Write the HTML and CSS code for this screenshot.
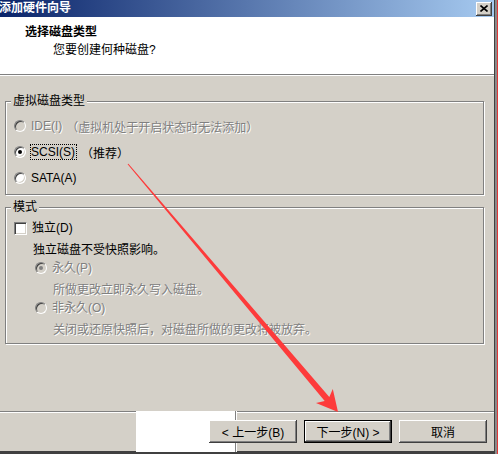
FILE: index.html
```html
<!DOCTYPE html>
<html lang="zh-CN">
<head>
    <meta charset="UTF-8">
    <title>添加硬件向导</title>
    <link rel="stylesheet" href="styles.css">
</head>
<body>
    <div class="screen">
        <div class="window">
            <div class="titlebar">
                <span class="title">添加硬件向导</span>
                <button class="close-btn">
                    <svg width="8" height="7" viewBox="0 0 8 7"><path d="M0.5 0.5 L7.5 6.5 M7.5 0.5 L0.5 6.5" stroke="#000" stroke-width="1.6"/></svg>
                </button>
            </div>
            <div class="page-header">
                <div class="page-title">选择磁盘类型</div>
                <div class="page-sub">您要创建何种磁盘?</div>
            </div>

            <div class="content">
                <fieldset class="group">
                    <legend>虚拟磁盘类型</legend>
                    <div class="group-body first">
                        <div class="opt disabled">
                            <span class="radio"></span>
                            <span class="opt-text">IDE(I)</span>
                            <span class="note">（虚拟机处于开启状态时无法添加）</span>
                        </div>
                        <div class="opt">
                            <span class="radio checked"></span>
                            <span class="opt-text focus">SCSI(S)</span>
                            <span class="note">（推荐）</span>
                        </div>
                        <div class="opt">
                            <span class="radio"></span>
                            <span class="opt-text">SATA(A)</span>
                        </div>
                    </div>
                </fieldset>

                <fieldset class="group mode">
                    <legend>模式</legend>
                    <div class="group-body second">
                        <div class="line">
                            <span class="check"></span>
                            <span class="opt-text">独立(D)</span>
                        </div>
                        <div class="line indent-text">独立磁盘不受快照影响。</div>
                        <div class="line indent-radio disabled">
                            <span class="radio checked"></span>
                            <span class="opt-text">永久(P)</span>
                        </div>
                        <div class="line indent-desc disabled">所做更改立即永久写入磁盘。</div>
                        <div class="line indent-radio disabled">
                            <span class="radio"></span>
                            <span class="opt-text">非永久(O)</span>
                        </div>
                        <div class="line indent-desc disabled">关闭或还原快照后，对磁盘所做的更改将被放弃。</div>
                    </div>
                </fieldset>
            </div>

            <div class="footer">
                <div class="patch"></div>
                <button class="btn">&lt; 上一步(B)</button>
                <button class="btn default">下一步(N) &gt;</button>
                <button class="btn">取消</button>
            </div>
        </div>
        <div class="edge"></div>
    </div>

    <!-- 截图上画的红色箭头 -->
    <svg class="arrow" width="498" height="454" viewBox="0 0 498 454">
        <polygon fill="#fd3b3b" points="128.4,163.7 329.3,397.1 332.8,388.9 338,412 316,403.1 324.7,400.9 127.6,164.3"/>
    </svg>
</body>
</html>
```

FILE: styles.css
```css
body {
    margin: 0;
    background: #404040;
    font-family: "Liberation Sans", "Noto Sans CJK SC", sans-serif;
    font-size: 12px;
    color: #000;
}
.screen {
    display: flex;
    height: 454px;
    overflow: hidden;
}
.window {
    width: 494px;
    height: 451px;
    background: #d4d0c8;
    display: flex;
    flex-direction: column;
    flex-shrink: 0;
}
.edge {
    width: 2px;
    height: 454px;
    background: #8a8a8a;
    border-left: 1px solid #404040;
    border-right: 1px solid #e23636;
}

/* タイトルバー */
.titlebar {
    height: 17px;
    background: linear-gradient(to right, #0a246a, #a6caf0);
    display: flex;
    align-items: center;
    justify-content: space-between;
}
.title {
    color: #fff;
    font-weight: bold;
    font-size: 12px;
    line-height: 17px;
    margin-left: -1px;
}
.close-btn {
    width: 16px;
    height: 14px;
    margin-right: 2px;
    padding: 0;
    border: 0;
    background: #d4d0c8;
    box-shadow: inset -1px -1px #404040, inset 1px 1px #fff, inset -2px -2px #808080, inset 2px 2px #d4d0c8;
    display: flex;
    align-items: center;
    justify-content: center;
}

.page-header {
    box-sizing: border-box;
    height: 58px;
    background: #fff;
    border-bottom: 1px solid #808080;
    box-shadow: 0 1px 0 #fff;
    padding: 8px 0 0 25px;
}
.page-title {
    font-weight: bold;
    line-height: 14px;
}
.page-sub {
    line-height: 14px;
    margin: 4px 0 0 28px;
}

.content {
    padding: 19px 0 0 5px;
}
.group {
    box-sizing: border-box;
    width: 479px;
    margin: 0;
    padding: 0;
    border: 1px solid #808080;
    box-shadow: 1px 1px 0 #fff, inset 1px 1px 0 #fff;
}
.group legend {
    margin-left: 5px;
    padding: 0 2px;
    line-height: 14px;
    background: #d4d0c8;
}
.group.mode {
    margin-top: 5px;
}
.group-body {
    padding-left: 8px;
}
.group-body.first {
    padding-top: 5px;
    padding-bottom: 3px;
}
.group-body.second {
    padding-top: 4px;
    padding-bottom: 5px;
}

.opt {
    display: flex;
    align-items: center;
    height: 26px;
}
.line {
    display: flex;
    align-items: center;
    height: 20px;
}
.indent-text { padding-left: 19px; }
.indent-radio { padding-left: 21px; }
.indent-desc { padding-left: 39px; }

.disabled {
    color: #808080;
    text-shadow: 1px 1px 0 #fff;
}

.radio {
    position: relative;
    width: 10px;
    height: 10px;
    border-radius: 50%;
    border: 1px solid;
    border-color: #808080 #fff #fff #808080;
    box-shadow: inset 1px 1px #404040, inset -1px -1px #d4d0c8;
    background: #fff;
    margin-right: 5px;
    flex-shrink: 0;
}
.disabled .radio {
    background: #d4d0c8;
}
.radio.checked::after {
    content: "";
    position: absolute;
    left: 3px;
    top: 3px;
    width: 4px;
    height: 4px;
    border-radius: 50%;
    background: #000;
}
.disabled .radio.checked::after {
    background: #808080;
}
.check {
    width: 11px;
    height: 11px;
    border: 1px solid;
    border-color: #808080 #fff #fff #808080;
    box-shadow: inset 1px 1px #404040, inset -1px -1px #d4d0c8;
    background: #fff;
    margin-right: 5px;
    flex-shrink: 0;
}
.opt-text {
    line-height: 14px;
}
.opt-text.focus {
    border: 1px dotted #000;
    margin-left: -1px;
    padding: 0 1px 0 0;
}
.note {
    margin-left: 4px;
}

.footer {
    position: relative;
    box-sizing: border-box;
    height: 40px;
    margin-top: auto;
    border-top: 1px solid #808080;
    box-shadow: inset 0 1px #fff;
    display: flex;
    justify-content: flex-end;
    align-items: flex-start;
    gap: 7px;
    padding: 8px 7px 0 0;
}
.patch {
    position: absolute;
    left: 136px;
    top: -1px;
    width: 99px;
    height: 41px;
    background: #fff;
    border-right: 1px solid #808080;
    box-shadow: 1px 0 0 #fff;
}
.btn {
    position: relative;
    box-sizing: border-box;
    width: 88px;
    height: 23px;
    padding: 0;
    border: 0;
    background: #d4d0c8;
    font: inherit;
    color: #000;
    box-shadow: inset -1px -1px #404040, inset 1px 1px #fff, inset -2px -2px #808080, inset 2px 2px #d4d0c8;
}
.btn.default {
    border: 1px solid #000;
}

.arrow {
    position: absolute;
    left: 0;
    top: 0;
    pointer-events: none;
}
```
